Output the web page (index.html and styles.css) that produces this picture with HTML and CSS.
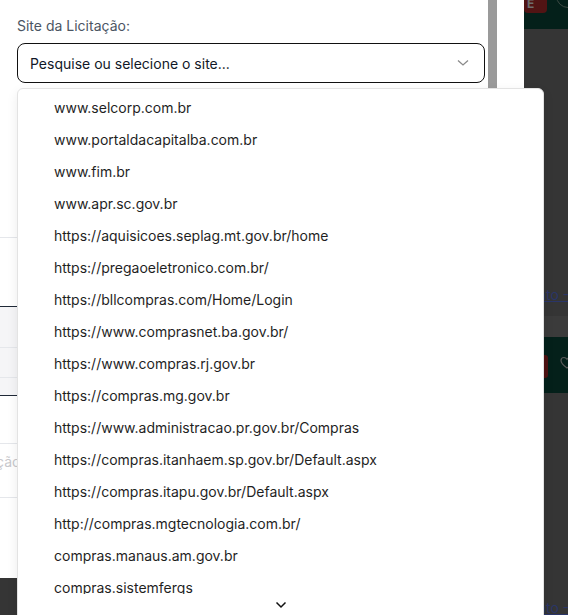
FILE: index.html
```html
<!DOCTYPE html>
<html lang="pt-BR">
<head>
<meta charset="utf-8">
<title>Site da Licitação</title>
<link rel="stylesheet" href="styles.css">
</head>
<body>
<div class="screen">
  <section class="modal">
    <div class="modal-scroll">
      <div class="form">
        <label class="field-label">Site da Licitação:</label>
        <div class="select">
          <span class="select-text">Pesquise ou selecione o site...</span>
          <svg class="select-chev" width="12" height="8" viewBox="0 0 12 8"><path d="M1 1.5 L6 6 L11 1.5" fill="none" stroke="#8a8a8a" stroke-width="1.3"/></svg>
        </div>
        <div class="sect-a"></div>
        <div class="sect-b"></div>
        <div class="grid">
          <div class="grid-row r1"></div>
          <div class="grid-row r2"></div>
          <div class="grid-row r3"></div>
        </div>
        <div class="sect-c"></div>
        <div class="sect-d"><span class="ghost">Situação</span></div>
      </div>
    </div>
    <div class="scrollbar"><div class="thumb"></div></div>
  </section>

  <aside class="backdrop">
    <div class="topbar">
      <div class="btn-red">E</div>
      <div class="ring"></div>
    </div>
    <div class="bd-space1"></div>
    <div class="bd-link"><span>documento - Edital</span></div>
    <div class="bd-band"></div>
    <div class="bd-green">
      <div class="red-tab"></div>
      <svg class="heart" width="14" height="14" viewBox="0 0 14 14"><path d="M7 12 C2 8.5 1 6.5 1 4.5 C1 2.8 2.3 1.5 4 1.5 C5.3 1.5 6.4 2.3 7 3.3 C7.6 2.3 8.7 1.5 10 1.5 C11.7 1.5 13 2.8 13 4.5 C13 6.5 12 8.5 7 12 Z" fill="none" stroke="#5a5a5a" stroke-width="1.2"/></svg>
    </div>
    <div class="bd-space2"></div>
    <div class="bd-link"><span>documento - Edital</span></div>
  </aside>

  <div class="menu">
    <ul class="menu-list">
      <li>www.selcorp.com.br</li>
      <li>www.portaldacapitalba.com.br</li>
      <li>www.fim.br</li>
      <li>www.apr.sc.gov.br</li>
      <li>https://aquisicoes.seplag.mt.gov.br/home</li>
      <li>https://pregaoeletronico.com.br/</li>
      <li>https://bllcompras.com/Home/Login</li>
      <li>https://www.comprasnet.ba.gov.br/</li>
      <li>https://www.compras.rj.gov.br</li>
      <li>https://compras.mg.gov.br</li>
      <li>https://www.administracao.pr.gov.br/Compras</li>
      <li>https://compras.itanhaem.sp.gov.br/Default.aspx</li>
      <li>https://compras.itapu.gov.br/Default.aspx</li>
      <li>http://compras.mgtecnologia.com.br/</li>
      <li>compras.manaus.am.gov.br</li>
      <li>compras.sistemfergs</li>
      <li>compras.sistemfergs.com.br</li>
    </ul>
    <div class="menu-more">
      <svg width="12" height="8" viewBox="0 0 12 8"><path d="M1.5 1.5 L6 6 L10.5 1.5" fill="none" stroke="#111" stroke-width="1.5"/></svg>
    </div>
  </div>
</div>
</body>
</html>
```

FILE: styles.css
```css
* { box-sizing: border-box; }

html, body {
  margin: 0;
  padding: 0;
}

body {
  width: 568px;
  height: 615px;
  overflow: hidden;
  background: #353535;
  font-family: Inter, "Noto Sans", "Liberation Sans", sans-serif;
}

.screen {
  position: relative;
  display: flex;
  width: 568px;
  height: 615px;
  overflow: hidden;
}

/* ---------- modal ---------- */
.modal {
  flex: none;
  width: 524px;
  height: 578px;
  background: #fff;
  display: flex;
  overflow: hidden;
}

.modal-scroll {
  width: 488px;
  flex: none;
}

.form {
  padding: 16px 0 0 17px;
  display: flex;
  flex-direction: column;
}

.field-label {
  font-size: 14px;
  line-height: 20px;
  color: #4b5563;
  margin-bottom: 7px;
}

.select {
  width: 468px;
  height: 40px;
  border: 1px solid #111;
  border-radius: 8px;
  display: flex;
  align-items: center;
  justify-content: space-between;
  padding: 0 15px 0 12px;
}

.select-text {
  font-size: 14px;
  color: #111827;
}

.select-chev { display: block; }

.sect-a {
  margin-left: -17px;
  height: 155px;
  border-bottom: 1px solid #e5e7eb;
}

.sect-b {
  height: 68px;
}

.grid {
  margin-left: -17px;
  border-top: 1px solid #1f2937;
  border-bottom: 1px solid #1f2937;
  background: #f5f5f7;
}

.grid-row { border-bottom: 1px solid #e5e7eb; }
.grid-row.r1 { height: 41px; }
.grid-row.r2 { height: 30px; }
.grid-row.r3 { height: 17px; border-bottom: none; }

.sect-c {
  margin-left: -17px;
  height: 48px;
  border-bottom: 1px solid #e5e7eb;
}

.sect-d {
  margin-left: -17px;
  height: 54px;
  border-bottom: 1px solid #e5e7eb;
  padding-top: 7px;
  white-space: nowrap;
}

.ghost {
  display: inline-block;
  margin-left: -37px;
  font-size: 14px;
  line-height: 20px;
  color: #c8c8cc;
}

.scrollbar {
  width: 9px;
  flex: none;
  background: #fff;
}

.thumb {
  height: 220px;
  background: #9a9a9a;
}

/* ---------- dimmed page behind ---------- */
.backdrop {
  flex: 1;
  background: #353535;
  display: flex;
  flex-direction: column;
  overflow: hidden;
}

.topbar {
  height: 29px;
  background: #04201a;
  position: relative;
  flex: none;
}

.btn-red {
  width: 23px;
  height: 13px;
  background: #511414;
  border-radius: 0 0 4px 4px;
  color: #6e6e6e;
  font-size: 12px;
  font-weight: 700;
  line-height: 8px;
  padding-left: 3px;
}

.ring {
  position: absolute;
  left: 32px;
  top: -16px;
  width: 24px;
  height: 24px;
  border: 1px solid #3d4a44;
  border-radius: 50%;
}

.bd-space1 { height: 257px; flex: none; }

.bd-link {
  height: 30px;
  flex: none;
  white-space: nowrap;
  font-size: 14px;
  line-height: 18px;
}

.bd-link span {
  display: inline-block;
  margin-left: -40px;
  color: #2a3568;
  text-decoration: underline;
}

.bd-band {
  height: 21px;
  flex: none;
  background: #3b3b3b;
}

.bd-green {
  height: 56px;
  flex: none;
  background: #04201a;
  position: relative;
}

.red-tab {
  position: absolute;
  left: 20px;
  top: 18px;
  width: 4px;
  height: 23px;
  background: #4e1212;
  border-radius: 0 3px 3px 0;
}

.heart {
  position: absolute;
  left: 36px;
  top: 19px;
}

.bd-space2 { height: 206px; flex: none; }

/* ---------- dropdown menu ---------- */
.menu {
  position: absolute;
  left: 17px;
  top: 88px;
  width: 527px;
  height: 560px;
  background: #fff;
  border: 1px solid #e3e3e3;
  border-radius: 6px;
  box-shadow: 0 4px 12px rgba(0, 0, 0, 0.08);
  overflow: hidden;
}

.menu-list {
  list-style: none;
  margin: 0;
  padding: 3px 0 0 0;
}

.menu-list li {
  height: 32px;
  line-height: 32px;
  padding-left: 36px;
  font-size: 14px;
  color: #1f1f1f;
  white-space: nowrap;
}

.menu-more {
  position: absolute;
  left: 0;
  right: 0;
  top: 505px;
  height: 40px;
  background: #fff;
  display: flex;
  justify-content: center;
  padding-top: 7px;
}

.menu-more svg { display: block; }
```
